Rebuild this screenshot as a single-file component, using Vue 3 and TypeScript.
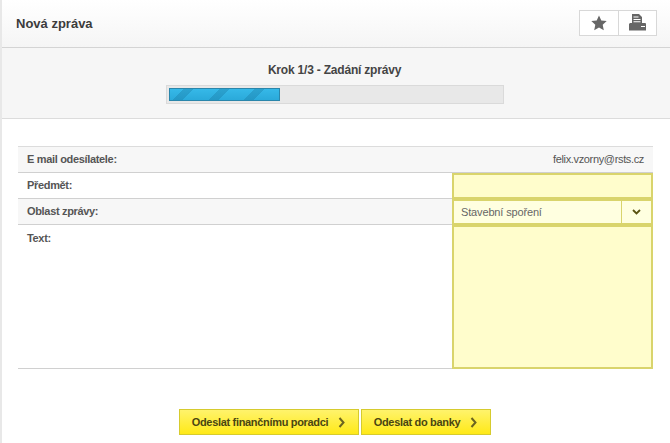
<script setup lang="ts">
const progress = 33.3
</script>

<template>
  <div class="page">
    <header class="head">
      <h1>Nová zpráva</h1>
      <div class="tools">
        <button class="tool" type="button">
          <svg width="16" height="16" viewBox="0 0 16 16"><path d="M8 .5l2.300 5 5.400.6-4 3.700 1.100 5.400L8 12.500l-4.800 2.700 1.100-5.400-4-3.700 5.400-.6z" fill="#666" /></svg>
        </button>
        <button class="tool" type="button">
          <svg width="18" height="17" viewBox="0 0 18 17"><path d="M3 0h7l3 3v6h3.500l.5 1v6.500H0V10l1-1h2z" fill="#666" /><path d="M4.500 2.500h5v1h-5zM4.500 5h7v1h-7zM4.500 7.300h7v1h-7z" fill="#fff" /><path d="M12 12h4v1h-4z" fill="#fff" /></svg>
        </button>
      </div>
    </header>

    <section class="steps">
      <div class="step-title">Krok 1/3 - Zadání zprávy</div>
      <div class="bar">
        <div class="fill" :style="{ width: progress + '%' }"></div>
      </div>
    </section>

    <form class="form" @submit.prevent>
      <div class="row shaded">
        <label>E mail odesílatele:</label>
        <span class="mail">felix.vzorny@rsts.cz</span>
      </div>
      <div class="row">
        <label>Předmět:</label>
        <div class="field"></div>
      </div>
      <div class="row shaded">
        <label>Oblast zprávy:</label>
        <div class="field select">
          <span class="value">Stavební spoření</span>
          <span class="arrow">
            <svg width="9" height="7" viewBox="0 0 9 7"><path d="M1 1l3.500 3.500L8 1" fill="none" stroke="#5a5210" stroke-width="1.800" /></svg>
          </span>
        </div>
      </div>
      <div class="row text-row">
        <label>Text:</label>
        <div class="field area"></div>
      </div>
    </form>

    <div class="actions">
      <button class="send first" type="button">
        Odeslat finančnímu poradci
        <svg width="8" height="11" viewBox="0 0 8 11"><path d="M1.500 1l4 4.500-4 4.500" fill="none" stroke="#6b6420" stroke-width="2" /></svg>
      </button>
      <button class="send second" type="button">
        Odeslat do banky
        <svg width="8" height="11" viewBox="0 0 8 11"><path d="M1.500 1l4 4.500-4 4.500" fill="none" stroke="#6b6420" stroke-width="2" /></svg>
      </button>
    </div>
  </div>
</template>

<style>
html, body {
  margin: 0;
  background: #fff;
}
</style>

<style scoped>
.page {
  width: 670px;
  height: 443px;
  box-sizing: border-box;
  border-left: 2px solid #e8e8e8;
  overflow: hidden;
  font-family: "Liberation Sans", Arial, sans-serif;
  font-size: 11px;
  color: #444;
  background: #fff;
}

.head {
  height: 48px;
  box-sizing: border-box;
  display: flex;
  align-items: center;
  justify-content: space-between;
  padding: 0 13px 0 14px;
  border-bottom: 1px solid #d4d4d4;
  background: linear-gradient(#fff, #f5f5f5);
}
.head h1 {
  margin: 0 0 1px;
  font-size: 13px;
  font-weight: bold;
  color: #3c3c3c;
}
.tools {
  display: flex;
  margin-bottom: 2px;
  border: 1px solid #d8d8d8;
  background: #fff;
}
.tool {
  width: 38px;
  height: 24px;
  padding: 0;
  border: 0;
  background: none;
  display: flex;
  align-items: center;
  justify-content: center;
}
.tool + .tool {
  border-left: 1px solid #d8d8d8;
}

.steps {
  height: 71px;
  box-sizing: border-box;
  padding-top: 15px;
  border-bottom: 1px solid #dcdcdc;
  background: #f6f6f6;
}
.step-title {
  padding-right: 3px;
  text-align: center;
  font-size: 12px;
  font-weight: bold;
  letter-spacing: -0.2px;
  line-height: 14px;
  color: #444;
}
.bar {
  width: 332px;
  height: 13px;
  margin: 8px 0 0 164px;
  padding: 2px;
  border: 1px solid #dadada;
  background: #e8e8e8;
}
.fill {
  height: 100%;
  border: 1px solid #2a86ab;
  box-sizing: border-box;
  background:
    repeating-linear-gradient(-45deg, transparent 0 18px, rgba(20, 110, 150, 0.3) 18px 25px),
    linear-gradient(#36b9e8, #2aa9da);
}

.form {
  margin: 27px 17px 0 16px;
  border-top: 1px solid #dcdcdc;
  border-bottom: 1px solid #d0d0d0;
}
.row {
  height: 26px;
  box-sizing: border-box;
  display: flex;
  align-items: stretch;
  justify-content: space-between;
  border-bottom: 1px solid #d0d0d0;
}
.row label {
  padding: 5px 0 0 9px;
  font-weight: bold;
  letter-spacing: -0.33px;
  line-height: 14px;
  color: #555;
}
.shaded {
  background: #f7f7f7;
}
.mail {
  padding: 5px 9px 0 0;
  letter-spacing: -0.35px;
  line-height: 14px;
  color: #555;
}
.field {
  width: 201px;
  box-sizing: border-box;
  border: 2px solid #d9d46c;
  background: #fffdcc;
}
.row .field {
  margin-bottom: -1px;
  height: 26px;
}
.select {
  display: flex;
  justify-content: space-between;
  background: #ffffe0;
}
.value {
  padding: 4px 0 0 7px;
  letter-spacing: -0.15px;
  line-height: 14px;
  color: #666;
}
.arrow {
  width: 29px;
  display: flex;
  align-items: center;
  justify-content: center;
  border-left: 1px solid #d9d46c;
}
.text-row {
  height: 143px;
  border-bottom: 0;
}
.text-row label {
  padding-top: 6px;
}
.row .area {
  height: 144px;
}

.actions {
  display: flex;
  gap: 2px;
  margin: 40px 0 0 177px;
}
.send {
  height: 26px;
  padding: 0;
  display: flex;
  align-items: center;
  justify-content: center;
  gap: 10px;
  box-sizing: border-box;
  border: 1px solid #d6cb2e;
  background: linear-gradient(#fff36c, #ffe917);
  font-family: inherit;
  font-size: 11px;
  font-weight: bold;
  letter-spacing: -0.32px;
  color: #4a4612;
}
.first {
  width: 180px;
}
.second {
  width: 130px;
}
</style>
